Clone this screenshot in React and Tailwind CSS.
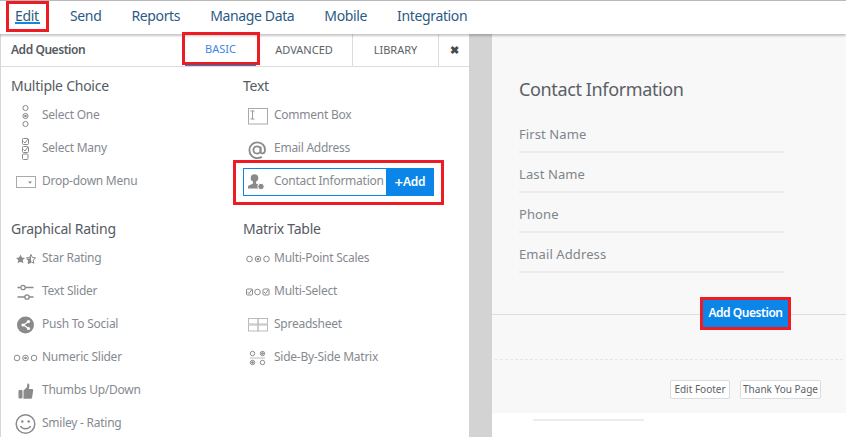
const FONT = "font-['Noto_Sans','Open_Sans',sans-serif]";

function Svg({ w = 22, h = 20, children }) {
  return (
    <svg width={w} height={h} viewBox={`0 0 ${w} ${h}`} fill="none" stroke="#8a8a8a" strokeWidth="1">
      {children}
    </svg>
  );
}

const C = ({ cx, cy, r = 2.6, dot }) => (
  <>
    <circle cx={cx} cy={cy} r={r} />
    {dot && <circle cx={cx} cy={cy} r={1.3} fill="#8a8a8a" stroke="none" />}
  </>
);

const Check = ({ x, y, s = 5, on = true }) => (
  <>
    <rect x={x} y={y} width={s} height={s} rx="1" />
    {on && <path d={`M${x + 1} ${y + s / 2}l1.5 1.5 3-4`} />}
  </>
);

const icons = {
  one: (
    <Svg h={22}>
      <C cx={9.5} cy={3} /><C cx={9.5} cy={11} dot /><C cx={9.5} cy={19} />
    </Svg>
  ),
  many: (
    <Svg h={22}>
      <Check x={6.5} y={0.5} s={6} /><Check x={6.5} y={8.5} s={6} /><Check x={6.5} y={16} s={5.5} on={false} />
    </Svg>
  ),
  drop: (
    <Svg w={22} h={14}>
      <rect x="0.5" y="1.5" width="19" height="11" stroke="#aaa" />
      <path d="M12 6.500h4l-2 2.200z" fill="#8a8a8a" stroke="none" />
    </Svg>
  ),
  comment: (
    <Svg w={22} h={18}>
      <rect x="0.5" y="1.5" width="19" height="15.500" stroke="#aaa" />
      <path d="M2.500 4h4M4.500 4v8M2.500 12h4" stroke="#999" />
    </Svg>
  ),
  at: (
    <svg width="22" height="22" viewBox="2 -1 22 22" fill="none" stroke="#8a8a8a" strokeWidth="1.8">
      <circle cx="11" cy="11" r="3.6" />
      <path d="M14.6 7.5v5c0 2.6 4 2.6 4.3-.6.6-5.2-3-8.6-7.6-8.6a7.9 7.9 0 0 0 0 15.8c1.8 0 3.100-.4 4.500-1.200" />
    </svg>
  ),
  person: (
    <svg width="22" height="20" viewBox="3 0 22 20">
      <circle cx="9.500" cy="6" r="3.800" fill="#8a8a8a" />
      <path d="M8 9h3v2.500l3 1.500v3.500H3V14l5-2.500z" fill="#8a8a8a" />
      <circle cx="16" cy="14.500" r="3.200" fill="#8a8a8a" stroke="#fff" />
    </svg>
  ),
  star: (
    <svg width="22" height="12" viewBox="1 0 22 12">
      <path d="M5.500 1.500l1.400 3 3.200.4-2.400 2.200.7 3.200-2.900-1.600-2.900 1.600.7-3.200L.9 4.900l3.200-.4z" fill="#8a8a8a" />
      <path d="M16 1.500l1.400 3 3.200.4-2.400 2.200.7 3.200-2.900-1.600-2.900 1.600.7-3.200-2.400-2.200 3.200-.4z" fill="none" stroke="#8a8a8a" />
      <path d="M16 1.500v8.200l-2.900 1.600.7-3.200-2.400-2.200 3.200-.4z" fill="#8a8a8a" />
    </svg>
  ),
  slider: (
    <Svg h={18}>
      <path d="M1.500 4.500h3M9.500 4.500h8M1.500 14h7.500M13 14h4.500" strokeWidth="1.500" />
      <circle cx="7" cy="4.500" r="2.200" strokeWidth="1.300" />
      <circle cx="11" cy="14" r="2.200" strokeWidth="1.300" />
    </Svg>
  ),
  social: (
    <svg width="22" height="20" viewBox="0 0 22 20">
      <circle cx="9.500" cy="10" r="8.500" fill="#8a8a8a" />
      <path d="M12.500 6.500L7.500 10l5 3.500" stroke="#fff" strokeWidth="1.200" fill="none" />
      <circle cx="12.500" cy="6.500" r="1.600" fill="#fff" />
      <circle cx="7" cy="10" r="1.600" fill="#fff" />
      <circle cx="12.500" cy="13.500" r="1.600" fill="#fff" />
    </svg>
  ),
  scale: (
    <Svg w={26} h={12}>
      <C cx={3} cy={6} r={2.800} /><C cx={11.500} cy={6} r={2.800} dot /><C cx={20} cy={6} r={2.800} />
    </Svg>
  ),
  thumb: (
    <svg width="22" height="18" viewBox="4.500 0 22 18">
      <rect x="7" y="8" width="4" height="8.500" rx="1" fill="#8a8a8a" />
      <path d="M12 8.500l3.500-3.500.5-3.500c2-.4 2.500 2 1.200 5.500h3.300c1 0 1.200 1 1.200 1.500l-1.200 7.500c-.2.600-.6.800-1.200.8H12z" fill="#8a8a8a" />
    </svg>
  ),
  smile: (
    <svg width="26" height="24" viewBox="2.500 0 26 24" fill="none" stroke="#8a8a8a" strokeWidth="1.500">
      <circle cx="14" cy="12" r="9.300" />
      <circle cx="10.800" cy="9.500" r="1.200" fill="#8a8a8a" stroke="none" />
      <circle cx="17.200" cy="9.500" r="1.200" fill="#8a8a8a" stroke="none" />
      <path d="M9 14c1.500 3.500 8.500 3.500 10 0" />
    </svg>
  ),
  mscale: (
    <Svg w={26} h={12}>
      <C cx={3.500} cy={6} r={2.800} /><C cx={12} cy={6} r={2.800} dot /><C cx={20.500} cy={6} r={2.800} />
    </Svg>
  ),
  mselect: (
    <Svg w={26} h={12}>
      <Check x={0.500} y={3} s={6} /><C cx={11.500} cy={6} r={2.800} /><Check x={17} y={3} s={6} />
    </Svg>
  ),
  sheet: (
    <svg width="22" height="16" viewBox="0 0 22 16" fill="none" stroke="#bbb">
      <rect x="0.500" y="1.500" width="9.500" height="5.500" />
      <rect x="10" y="1.500" width="9.500" height="5.500" />
      <rect x="0.500" y="8" width="9.500" height="6" />
      <rect x="10" y="8" width="9.500" height="6" />
    </svg>
  ),
  sbs: (
    <Svg h={18}>
      <C cx={4.500} cy={4.500} r={2.200} /><C cx={14.500} cy={4.500} r={2.200} dot />
      <C cx={4.500} cy={13.500} r={2.200} dot /><C cx={14.500} cy={13.500} r={2.200} />
      <path d="M2 9h15" stroke="#bbb" />
    </Svg>
  ),
};

function Row({ icon, label }) {
  return (
    <div className="h-[33px] flex items-center">
      <div className="w-[31px] flex justify-center shrink-0">{icons[icon]}</div>
      <span className="text-[12px] tracking-[-0.25px] pb-px text-[#858a90] whitespace-nowrap">{label}</span>
    </div>
  );
}

function Section({ title, rows, className = "" }) {
  return (
    <div className={className}>
      <div className="h-5 leading-5 text-[14px] tracking-[-0.25px] text-[#555b62] mb-[3px]">{title}</div>
      {rows.map(([icon, label]) =>
        label === "Contact Information" ? (
          <div key={label} className="relative h-[33px] flex items-center">
            <Row icon={icon} label={label} />
            <div className="absolute left-0 top-[3px] w-[191px] h-[28px] border border-[#0b86e8] pointer-events-none" />
            <div className="absolute left-[143px] top-[3px] w-[48px] h-[28px] bg-[#0b86e8] text-white text-[12px] tracking-[-0.2px] font-semibold flex items-center justify-center">
              <span className="text-[15px] leading-none">+</span>Add
            </div>
          </div>
        ) : (
          <Row key={label} icon={icon} label={label} />
        )
      )}
    </div>
  );
}

function Field({ label }) {
  return (
    <div className="h-10 flex flex-col justify-end">
      <div className="text-[13px] leading-5 tracking-[0.1px] text-[#7f858b] mb-[6px]">{label}</div>
      <div className="h-[2px] bg-[#ececec] mt-px" />
    </div>
  );
}

function Tab({ className = "", children }) {
  return (
    <div className={`h-full flex items-center justify-center text-[11px] ${className}`}>{children}</div>
  );
}

export default function App() {
  return (
    <div className={`relative w-[846px] h-[437px] overflow-hidden bg-white flex flex-col ${FONT}`}>
      {/* Top nav */}
      <nav className="relative z-10 h-[34px] shrink-0 border-t border-[#b9b9b9] bg-white shadow-[0_2px_2px_rgba(0,0,0,0.22)] flex items-start pt-[8px] pl-[15px] gap-[30px] text-[14px] leading-[13px] tracking-[-0.36px] text-[#2c5a85]">
        <span className="w-[25px] border-b-2 border-[#1488d8]">Edit</span>
        <span>Send</span>
        <span>Reports</span>
        <span>Manage Data</span>
        <span>Mobile</span>
        <span>Integration</span>
      </nav>

      <div className="flex flex-1 min-h-0">
        {/* Left panel */}
        <aside className="w-[469px] shrink-0 bg-white border-l border-[#d6d6d6]">
          <div className="h-[33px] border-b border-[#dcdcdc] flex items-center">
            <div className="w-[184px] pl-[10px] text-[12px] tracking-[-0.45px] font-semibold text-[#555b62]">Add Question</div>
            <Tab className="w-[71px] text-[#3f86e6] border-b-2 border-[#1488d8]">BASIC</Tab>
            <Tab className="w-[97px] text-[#5c6268] border-r border-[#dcdcdc]">ADVANCED</Tab>
            <Tab className="w-[86px] text-[#5c6268] border-r border-[#dcdcdc]">LIBRARY</Tab>
            <Tab className="w-[30px] text-[#4a4a4a] font-bold">✖</Tab>
          </div>
          <div className="flex pt-[9px]">
            <div className="w-[242px] pl-[10px] shrink-0">
              <Section title="Multiple Choice" rows={[["one", "Select One"], ["many", "Select Many"], ["drop", "Drop-down Menu"]]} />
              <Section
                className="mt-[21px]"
                title="Graphical Rating"
                rows={[["star", "Star Rating"], ["slider", "Text Slider"], ["social", "Push To Social"], ["scale", "Numeric Slider"], ["thumb", "Thumbs Up/Down"], ["smile", "Smiley - Rating"]]}
              />
            </div>
            <div className="flex-1">
              <Section title="Text" rows={[["comment", "Comment Box"], ["at", "Email Address"], ["person", "Contact Information"]]} />
              <Section
                className="mt-[21px]"
                title="Matrix Table"
                rows={[["mscale", "Multi-Point Scales"], ["mselect", "Multi-Select"], ["sheet", "Spreadsheet"], ["sbs", "Side-By-Side Matrix"]]}
              />
            </div>
          </div>
        </aside>

        {/* Gutter */}
        <div className="w-[23px] shrink-0 bg-[#d3d3d3]" />

        {/* Preview */}
        <main className="flex-1 min-w-0 bg-white flex flex-col">
          <div className="h-[379px] shrink-0 bg-[#f8f8f8] flex flex-col">
            <div className="pl-[27px] pr-[62px] pt-[43px]">
              <div className="text-[18px] leading-6 tracking-[-0.37px] text-[#5a6066] mb-[12px]">Contact Information</div>
              <Field label="First Name" />
              <Field label="Last Name" />
              <Field label="Phone" />
              <Field label="Email Address" />
            </div>
            <div className="relative mt-[41px] h-px bg-[#dddddd] shrink-0">
              <div className="absolute left-[211px] top-[-14px] w-[85px] h-[27px] bg-[#0b86e8] text-white text-[12px] tracking-[-0.45px] font-semibold flex items-center justify-center pb-px">
                Add Question
              </div>
            </div>
            <div className="mt-[44px] mx-[3px] border-t border-dashed border-[#e6e6e6]" />
            <div className="mt-5 pr-[25px] flex justify-end gap-[10px]">
              <div className="w-[60px] h-[19px] border border-[#dcdcdc] rounded-[2px] bg-white text-[10px] text-[#5c6268] flex items-center justify-center whitespace-nowrap">Edit Footer</div>
              <div className="w-[81px] h-[19px] border border-[#dcdcdc] rounded-[2px] bg-white text-[10px] text-[#5c6268] flex items-center justify-center whitespace-nowrap">Thank You Page</div>
            </div>
          </div>
          <div className="ml-[41px] mt-[6px] w-[111px] h-[2px] bg-[#ececec]" />
        </main>
      </div>

      {/* Red annotation boxes */}
      <div className="absolute z-20 left-[6px] top-[1px] w-[43px] h-[31px] border-[3px] border-[#ed1c24]" />
      <div className="absolute z-20 left-[182px] top-[32px] w-[78px] h-[33px] border-[3px] border-[#ed1c24]" />
      <div className="absolute z-20 left-[233px] top-[160px] w-[211px] h-[45px] border-[3px] border-[#ed1c24]" />
      <div className="absolute z-20 left-[700px] top-[297px] w-[91px] h-[33px] border-[3px] border-[#ed1c24]" />
    </div>
  );
}
